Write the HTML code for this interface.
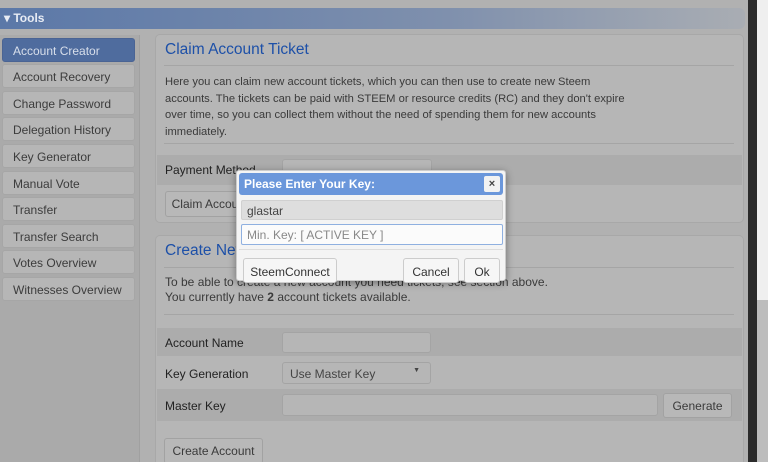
<!DOCTYPE html><html><head><style>
html,body{margin:0;width:768px;height:462px;overflow:hidden}
body{background:#b1b1b1;font-family:"Liberation Sans",sans-serif;font-size:12px;color:#3a3a3a;position:relative}
.a{position:absolute;box-sizing:border-box}
.hdr{left:0;top:8px;width:745px;height:21px;border-radius:0 6px 6px 0;background:linear-gradient(90deg,#5b78a8,#7f90ad 60%,#a9adb3);color:#e8ecf4;font-weight:bold;padding:3px 4px;font-size:12px}
.side{left:0;top:35px;width:140px;height:427px;background:#aaa;border-right:1px solid #a0a0a0}
.it{left:2px;width:133px;height:24px;border:1px solid #a6a6a6;border-radius:3px;background:#b6b6b6;padding:5px 0 0 10px;font-size:12px;color:#3c3c3c}
.sel{background:#4f6c9e;color:#d8dfeb;border-color:#4a6494}
.pan{left:155px;width:589px;border:1px solid #a8a8a8;border-radius:5px;background:#b6b6b6}
h2{margin:0;font-weight:normal;color:#1d50a8;font-size:15.5px;position:absolute}
.line{height:1px;background:#a5a5a5;left:164px;width:570px}
.row{left:157px;width:585px;background:#acacac}
.inp{border:1px solid #a4a4a4;border-radius:3px;background:#b6b6b6}
.btn{border:1px solid #a2a2a2;border-radius:3px;background:#b8b8b8;text-align:center;padding-top:5px;color:#3a3a3a}
.dlg{left:236px;top:170px;width:270px;height:111px;background:#f4f4f4;border:1px solid #ccc;border-radius:3px;box-shadow:0 2px 8px rgba(0,0,0,.4)}
.db{border:1px solid #ccc;border-radius:3px;background:#f6f6f6;text-align:center;color:#333;padding-top:6px}
</style></head><body>
<div class="a hdr">&#9662; Tools</div>
<div class="a side"></div>
<div class="a it sel" style="top:38px">Account Creator</div>
<div class="a it" style="top:64px">Account Recovery</div>
<div class="a it" style="top:91px">Change Password</div>
<div class="a it" style="top:117px">Delegation History</div>
<div class="a it" style="top:144px">Key Generator</div>
<div class="a it" style="top:171px">Manual Vote</div>
<div class="a it" style="top:197px">Transfer</div>
<div class="a it" style="top:224px">Transfer Search</div>
<div class="a it" style="top:250px">Votes Overview</div>
<div class="a it" style="top:277px">Witnesses Overview</div>

<div class="a pan" style="top:34px;height:189px"></div>
<h2 style="left:165px;top:41px">Claim Account Ticket</h2>
<div class="a line" style="top:65px"></div>
<div class="a" style="left:165px;top:74px;white-space:nowrap;line-height:16.5px;font-size:11.2px">Here you can claim new account tickets, which you can then use to create new Steem<br>accounts. The tickets can be paid with STEEM or resource credits (RC) and they don't expire<br>over time, so you can collect them without the need of spending them for new accounts<br>immediately.</div>
<div class="a line" style="top:143px"></div>
<div class="a row" style="top:155px;height:30px"></div>
<div class="a" style="left:165px;top:163px;color:#222">Payment Method</div>
<div class="a inp" style="left:282px;top:159px;width:150px;height:22px"></div>
<div class="a btn" style="left:165px;top:191px;width:90px;height:26px">Claim Account</div>

<div class="a pan" style="top:235px;height:240px"></div>
<h2 style="left:165px;top:242px">Create New Account</h2>
<div class="a line" style="top:267px"></div>
<div class="a" style="left:165px;top:275px;line-height:15px">To be able to create a new account you need tickets, see section above.<br>You currently have <b>2</b> account tickets available.</div>
<div class="a line" style="top:314px"></div>
<div class="a row" style="top:328px;height:28px"></div>
<div class="a" style="left:165px;top:336px;color:#222">Account Name</div>
<div class="a inp" style="left:282px;top:332px;width:149px;height:21px"></div>
<div class="a" style="left:165px;top:367px;color:#222">Key Generation</div>
<div class="a inp" style="left:282px;top:362px;width:149px;height:22px;padding:4px 0 0 7px;color:#444">Use Master Key<span style="position:absolute;right:10px;top:4px;font-size:7px">&#9660;</span></div>
<div class="a row" style="top:389px;height:32px;background:#acacac"></div>
<div class="a" style="left:165px;top:399px;color:#222">Master Key</div>
<div class="a inp" style="left:282px;top:394px;width:376px;height:22px"></div>
<div class="a btn" style="left:663px;top:393px;width:69px;height:25px">Generate</div>
<div class="a btn" style="left:164px;top:438px;width:99px;height:26px">Create Account</div>

<div class="a" style="left:748px;top:0;width:9px;height:462px;background:#2b2b2b"></div>
<div class="a" style="left:757px;top:0;width:11px;height:300px;background:#efefef"></div>
<div class="a" style="left:757px;top:300px;width:11px;height:162px;background:#bdbdbd"></div>

<div class="a dlg">
<div class="a" style="left:2px;top:2px;width:264px;height:22px;background:#6b97db;border-radius:3px;color:#fff;font-weight:bold;padding:4px 0 0 5px">Please Enter Your Key:</div>
<div class="a" style="left:247px;top:5px;width:16px;height:16px;background:#f2f2f2;border-radius:2px;text-align:center;font-size:11px;font-weight:bold;color:#444;line-height:16px">&#215;</div>
<div class="a" style="left:4px;top:29px;width:262px;height:20px;background:#dedede;border:1px solid #d0d0d0;border-radius:2px;padding:3px 0 0 5px;color:#444">glastar</div>
<div class="a" style="left:4px;top:53px;width:262px;height:21px;background:#fbfbfb;border:1px solid #8fb0e0;border-radius:2px;padding:3px 0 0 5px;color:#888">Min. Key: [ ACTIVE KEY ]</div>
<div class="a" style="left:2px;top:78px;width:264px;height:1px;background:#ddd"></div>
<div class="a db" style="left:6px;top:87px;width:94px;height:25px">SteemConnect</div>
<div class="a db" style="left:166px;top:87px;width:56px;height:25px">Cancel</div>
<div class="a db" style="left:227px;top:87px;width:36px;height:25px">Ok</div>
</div>
</body></html>
